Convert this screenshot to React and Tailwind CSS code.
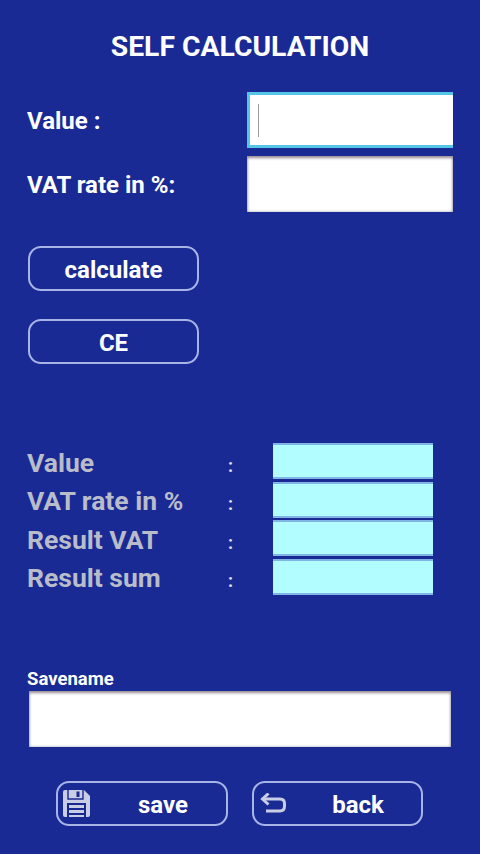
import { useState } from "react";

const results = ["Value", "VAT rate in %", "Result VAT", "Result sum"];

function OutlineButton({ children }) {
  return (
    <button className="h-[45px] w-[171px] rounded-[13px] border-2 border-[#a9b4e6] pt-[3px] text-[24px] font-bold text-white">
      {children}
    </button>
  );
}

function SaveIcon() {
  return (
    <svg width="27" height="27" viewBox="0 0 27 27" className="shrink-0">
      <path fill="#c9cde6" d="M0 2 Q0 0 2 0 H21 L27 6 V25 Q27 27 25 27 H2 Q0 27 0 25 Z" />
      <path fill="none" stroke="#182a91" strokeWidth="1.4" d="M5 0 V9 H20 V0" />
      <rect x="13.5" y="1.5" width="3" height="5.5" fill="#182a91" />
      <rect x="4" y="13" width="19" height="14" fill="#182a91" />
      <rect x="6" y="15" width="15" height="3" fill="#c9cde6" />
      <rect x="6" y="20" width="15" height="3" fill="#c9cde6" />
      <rect x="6" y="25" width="15" height="2" fill="#c9cde6" />
    </svg>
  );
}

function BackIcon() {
  return (
    <svg width="27" height="20" viewBox="0 0 27 20" fill="none" stroke="#c9cde6" strokeWidth="3" className="shrink-0">
      <path d="M3 6 H20 Q24.5 6 24.5 10.5 V13 Q24.5 18 20 18 H6" />
      <path d="M8.5 0.5 L2.5 6 L8.5 11.5" />
    </svg>
  );
}

export default function App() {
  const [value, setValue] = useState("");
  const [rate, setRate] = useState("");
  const [saveName, setSaveName] = useState("");

  return (
    <div className="h-[854px] w-[480px] overflow-hidden bg-[#192a95] font-['Roboto',sans-serif]">
      {/* Title */}
      <h1 className="pt-[31px] text-center text-[28.3px] leading-[32px] font-bold text-white">SELF CALCULATION</h1>

      {/* Inputs */}
      <div className="mt-[29px] flex h-[56px] items-center justify-between pt-[1px] pl-[27px] pr-[27px]">
        <label className="pt-[1px] text-[24px] font-bold text-white">Value :</label>
        <div className="-mt-[1px] flex h-[56px] w-[206px] items-center border-y-[3px] border-l-[3px] border-y-[#56c6e8] border-l-[#56c6e8] bg-white pl-[8px]">
          <span className="h-[33px] w-[1px] shrink-0 bg-[#9a9a9a]" />
          <input value={value} onChange={e => setValue(e.target.value)} className="h-full w-full outline-none" />
        </div>
      </div>
      <div className="mt-[8px] flex h-[56px] items-center justify-between pl-[27px] pr-[27px]">
        <label className="pt-[1px] text-[24px] font-bold text-white">VAT rate in %:</label>
        <input
          value={rate}
          onChange={e => setRate(e.target.value)}
          className="h-[56px] w-[206px] bg-white shadow-[inset_0_2px_3px_#9a8f96,inset_0_0_3px_#a0a0b0] outline-none"
        />
      </div>

      {/* Buttons */}
      <div className="mt-[34px] flex flex-col gap-[28px] pl-[28px]">
        <OutlineButton>calculate</OutlineButton>
        <OutlineButton>CE</OutlineButton>
      </div>

      {/* Results */}
      <div className="mt-[79px] flex flex-col gap-[2.6px] pl-[27px]">
        {results.map(r => (
          <div key={r} className="flex h-[36px] items-center">
            <span className="w-[200px] pt-[3px] text-[26.5px] font-bold text-[#b9bcc9]">{r}</span>
            <span className="mt-[8px] w-[46px] pl-[1px] text-[18px] font-bold text-[#e0e3f5]">:</span>
            <div className="h-[36px] w-[160px] border-y-2 border-[#7fb6e6] bg-[#b2fdff]" />
          </div>
        ))}
      </div>

      {/* Savename */}
      <div className="mt-[74px] pl-[27px] text-[18.5px] leading-[20px] font-bold text-white">Savename</div>
      <div className="mt-[2px] pl-[29px]">
        <input
          value={saveName}
          onChange={e => setSaveName(e.target.value)}
          className="h-[56px] w-[422px] bg-white shadow-[inset_0_2px_3px_#9a8f96,inset_0_0_3px_#a0a0b0] outline-none"
        />
      </div>

      {/* Bottom buttons */}
      <div className="mt-[34px] flex gap-[24px] pl-[56px]">
        <button className="flex h-[45px] w-[172px] items-center rounded-[13px] border-2 border-[#a9b4e6] pl-[5px] text-[24px] font-bold text-white">
          <SaveIcon />
          <span className="flex-1 pt-[3px] pl-[10px] text-center">save</span>
        </button>
        <button className="flex h-[45px] w-[171px] items-center rounded-[13px] border-2 border-[#a9b4e6] pl-[6px] text-[24px] font-bold text-white">
          <BackIcon />
          <span className="flex-1 pt-[3px] pl-[8px] text-center">back</span>
        </button>
      </div>
    </div>
  );
}
